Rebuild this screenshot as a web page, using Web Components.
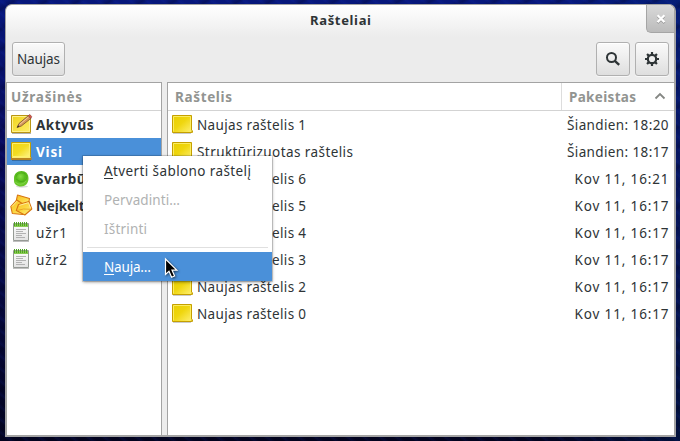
<!DOCTYPE html>
<html lang="lt">
<head>
<meta charset="utf-8">
<title>Rašteliai</title>
<style>
html,body{margin:0;height:100%;overflow:hidden}
body{font:13.500px "Noto Sans","Open Sans",sans-serif;color:#2e3436}
</style>
</head>
<body>
<notes-desktop></notes-desktop>
<script>
const define = (name, html, setup) => customElements.define(name, class extends HTMLElement {
  connectedCallback() {
    if (this.shadowRoot) return;
    this.attachShadow({mode: 'open'}).innerHTML = typeof html === 'function' ? html(this) : html;
    if (setup) setup(this);
  }
});

/* Label whose letter spacing is adjusted to give a fixed advance width. */
define('fit-text', '<style>:host{display:inline-block;white-space:nowrap;flex:none}span{display:inline-block;white-space:nowrap}</style><span><slot></slot></span>', el => {
  const w = +el.getAttribute('w'), s = el.shadowRoot.querySelector('span');
  const n = el.textContent.length;
  s.style.letterSpacing = (w - s.getBoundingClientRect().width) / (n - 1) + 'px';
  el.style.width = w + 'px';
});

const icons = {
  note: `<defs><linearGradient id="g" x2="1" y2="1"><stop stop-color="#e9ce00"/><stop offset=".45" stop-color="#efd60e"/><stop offset="1" stop-color="#fff176"/></linearGradient></defs>
    <path d="M2 19.500h18" stroke="#000" stroke-opacity=".2"/><path d="M1.500 1.500h19v14.500l1 1v1l-1.500.5h-18.500z" fill="url(#g)" stroke="#c5a000"/><path d="M2.500 17.500v-15h17v14" fill="none" stroke="#fbec62"/><path d="M19 18.500l3-2-.5 2.500z" fill="#c8a30a"/>`,
  pad: `<defs><linearGradient id="g" x2="1" y2="1"><stop stop-color="#f0d510"/><stop offset=".5" stop-color="#f3dc22"/><stop offset="1" stop-color="#fff58f"/></linearGradient></defs>
    <path d="M2 19.500h19" stroke="#000" stroke-opacity=".25"/><path d="M1.500 1.500h19v15h-19z" fill="url(#g)" stroke="#c5a000"/><path d="M2.500 15.500v-13h17v13z" fill="none" stroke="#fff06b"/><path d="M1 16h20.500v3h-20.500z" fill="#b98420"/><path d="M2 16.500h18.500" stroke="#fbea70"/>`,
  edit: `<defs><linearGradient id="g" x2="1" y2="1"><stop stop-color="#efd21a"/><stop offset="1" stop-color="#fff06a"/></linearGradient></defs>
    <path d="M2 19.500h19" stroke="#000" stroke-opacity=".3"/><path d="M1.500 1.500h19v17h-19z" fill="url(#g)" stroke="#b99513"/><path d="M2.500 17.500v-15h17v15z" fill="none" stroke="#fff28a"/>
    <path d="M7 13.500l2-4 9.500-8 2.500 2.800-9.700 7.700z" fill="#d7985b" stroke="#79502d" stroke-width=".8"/><path d="M9.500 10.500l9-7.500" stroke="#f2cda0"/><path d="M18.300 1.700l1.500-1.300 2.200 2.500-1.500 1.400z" fill="#d85650" stroke="#8e4740" stroke-width=".6"/><path d="M7 13.500l1.100-2.300 1.400 1.600z" fill="#3c3221"/>`,
  pin: `<defs><radialGradient id="g" cx=".45" cy=".35"><stop stop-color="#85dc45"/><stop offset=".65" stop-color="#54ba1b"/><stop offset="1" stop-color="#6ac62c"/></radialGradient></defs>
    <ellipse cx="12" cy="18.500" rx="6" ry="1.200" opacity=".15"/><path d="M4 10c0-4 3-7 7.500-7 4.500 0 7 3 7 7.500 0 5-3.500 8-7.500 8-4 0-7-2.500-7-5.500z" fill="url(#g)"/><path d="M6.500 8.500c0-4.500 10-5 10.500 0 0 6-8 6.500-10.500 2.500" fill="none" stroke="#419c13" stroke-opacity=".5"/><path d="M5.500 14c2.500 3.500 8 2.500 10.500-1" fill="none" stroke="#8add50" stroke-opacity=".7"/>`,
  stack: `<defs><linearGradient id="g" x2="1" y2="1"><stop stop-color="#f9bd20"/><stop offset=".5" stop-color="#fbd741"/><stop offset="1" stop-color="#fff389"/></linearGradient></defs>
    <g fill="url(#g)" stroke="#d87510" stroke-width="1.100" stroke-linejoin="round"><path d="M7.500 0l12 3.500-1.500 8-12.500-2.500z"/><path d="M.8 11.500l6-6.500 10 6.500-4 8-10.500-1z"/><path d="M8.500 9.500l10.500-3 2.800 7.500-7 6-8.500-4.500z"/></g><path d="M9.500 10.300l9-2.600 2 5.500M2 11.500l5-5.300" fill="none" stroke="#ffeb9b"/><path d="M7 15.500l6.500-1.500 7.500.3" fill="none" stroke="#e49b20" stroke-width=".8"/>`,
  book: `<defs><linearGradient id="g" x2="0" y2="1"><stop stop-color="#fff"/><stop offset="1" stop-color="#e2e2e2"/></linearGradient></defs>
    <path d="M3 19.500h16" stroke="#000" stroke-opacity=".25"/><path d="M3.500 1.500h15v17h-15z" fill="url(#g)" stroke="#969a95"/><path d="M4 2h14v3h-14z" fill="#8acb53"/><path d="M4.500 0v4M6.500 0v4M8.500 0v4M10.500 0v4M12.500 0v4M14.500 0v4M16.500 0v4" stroke="#4fa322"/><path d="M6 7.500h10M6 9.500h7M6 11.500h10M6 13.500h6M6 15.500h9" stroke="#aaa" stroke-width=".9"/>`
};
define('note-icon', el => `<style>:host{display:block;width:23px;height:21px;flex:none}svg{display:block;overflow:visible}</style><svg width="23" height="21" viewBox="0 0 23 21">${icons[el.getAttribute('name')]}</svg>`);

define('tool-button', `<style>
:host{display:flex;box-sizing:border-box;height:34px;align-items:center;justify-content:center;border:1px solid #b0b0b0;border-radius:3px;background:linear-gradient(#fafafa,#eee 45%,#dedede);box-shadow:inset 0 1px #fff,0 1px #f8f8f8;flex:none}
</style><slot></slot>`);

define('title-bar', `<style>
:host{display:grid;grid-template-columns:29px 1fr 28px;height:32px;background:linear-gradient(#fff,#ececec);font:bold 13px "Noto Sans",sans-serif;border-radius:6px 6px 0 0}
.t{grid-column:2;text-align:center;line-height:30px}
.x{box-sizing:border-box;height:28px;border:solid #a5a5a5;border-width:0 0 1px 1px;border-radius:0 5px 0 5px;background:linear-gradient(#d9d9d9,#bbb);display:grid;place-items:center}
</style><div class="t"><fit-text w="61">Rašteliai</fit-text></div><div class="x"><svg width="10" height="10" viewBox="0 0 10 10"><path d="M1.500 2l7 7M8.500 2l-7 7" stroke="#888" stroke-width="2.300"/><path d="M1.500 1.200l7 7M8.500 1.200l-7 7" stroke="#fff" stroke-width="2.300"/></svg></div>`);

define('tool-bar', `<style>
:host{display:flex;height:45px;box-sizing:border-box;padding:5px 5px 0 6px;gap:5px;background:#ececec}
.naujas{width:53px}.sq{width:34px}.gap{flex:1}svg{display:block}
</style><tool-button class="naujas"><fit-text w="43">Naujas</fit-text></tool-button><span class="gap"></span>
<tool-button class="sq"><svg width="16" height="16" viewBox="0 0 16 16"><circle cx="6.500" cy="6.500" r="4.500" fill="none" stroke="#2e3436" stroke-width="2"/><path d="M9.800 9.800l4.400 4" stroke="#2e3436" stroke-width="2.400"/></svg></tool-button>
<tool-button class="sq"><svg width="16" height="16" viewBox="0 0 16 16"><circle cx="8" cy="8" r="4.200" fill="none" stroke="#2e3436" stroke-width="2.200"/><path d="M8 1v2.500M8 12.500v2.500M1 8h2.500M12.500 8h2.500M3.050 3.050l1.800 1.800M11.150 11.150l1.800 1.800M3.050 12.950l1.800-1.800M11.150 4.850l1.800-1.800" stroke="#2e3436" stroke-width="2.200"/></svg></tool-button>`);

define('column-header', `<style>:host{display:flex;box-sizing:border-box;height:28px;border-bottom:1px solid #d3d3d3;color:#929491;font:bold 13.500px "Noto Sans",sans-serif;align-items:stretch;line-height:28px}</style><slot></slot>`);

define('list-row', el => `<style>
:host{display:flex;height:27px;align-items:center;line-height:27px;padding:0 5.500px 0 3px}
:host([bold]){font:bold 13.500px/27px "Noto Sans",sans-serif}
:host([selected]){background:#4a90d9;color:#fff}
note-icon{margin-right:3px}.end{margin-left:auto;display:flex}
::slotted(fit-text){margin-top:2px}
</style><note-icon name="${el.getAttribute('icon')}"></note-icon><slot></slot><span class="end"><slot name="end"></slot></span>`);

define('notebook-list', () => `<style>
:host{display:block;width:154px;background:#fff;border:solid #a3a3a3;border-width:1px 1px 0 0;overflow:hidden}
column-header fit-text{margin-left:4px}
</style><column-header><fit-text w="71">Užrašinės</fit-text></column-header>
<list-row bold icon="edit"><fit-text w="57.500">Aktyvūs</fit-text></list-row>
<list-row bold selected icon="pad"><fit-text w="26">Visi</fit-text></list-row>
<list-row bold icon="pin"><fit-text w="57">Svarbūs</fit-text></list-row>
<list-row bold icon="stack"><fit-text w="52.500">Neįkelti</fit-text></list-row>
<list-row icon="book"><fit-text w="31">užr1</fit-text></list-row>
<list-row icon="book"><fit-text w="31">užr2</fit-text></list-row>`);

const notes = [['Naujas raštelis 1',109,'Šiandien: 18:20'],['Struktūrizuotas raštelis',156,'Šiandien: 18:17'],['Naujas raštelis 6',109,'Kov 11, 16:21'],
  ...[5,4,3,2,0].map(n => ['Naujas raštelis ' + n,109,'Kov 11, 16:17'])];
define('note-list', () => `<style>
:host{display:block;background:#fff;border:solid #a3a3a3;border-width:1px 0 0 1px}
.a{flex:1;padding-left:7px}.b{width:105px;padding-left:7px;display:flex;border-left:1px solid #ddd}
svg{margin:8px 0 0 18px}
</style><column-header><div class="a"><fit-text w="57">Raštelis</fit-text></div><div class="b"><fit-text w="67">Pakeistas</fit-text><svg width="12" height="10" viewBox="0 0 12 10"><path d="M1.500 7.500l4.500-4.500 4.500 4.500" fill="none" stroke="#858784" stroke-width="1.800"/></svg></div></column-header>
${notes.map(([t,w,d]) => `<list-row icon="note"><fit-text w="${w}">${t}</fit-text><fit-text slot="end" w="${d[0]==='K'?94:101.5}">${d}</fit-text></list-row>`).join('')}`);

define('menu-item', `<style>:host{display:flex;height:29px;align-items:center;line-height:29px;padding-left:21px}
:host([disabled]){color:#b0b2b2}:host([active]){background:#4a90d9;color:#fff}::slotted(fit-text){margin-top:2px}</style><slot></slot>`);

define('context-menu', `<style>
:host{display:block;width:189px;box-sizing:border-box;background:#fff;box-shadow:0 0 0 1px rgba(0,0,0,.12),0 1px 3px rgba(0,0,0,.45)}
hr{border:0;height:1px;background:#e0e0e0;margin:4px}u{text-underline-offset:2px;text-decoration-thickness:1px}
</style><menu-item><fit-text w="147"><u>A</u>tverti šablono raštelį</fit-text></menu-item>
<menu-item disabled><fit-text w="76">Pervadinti…</fit-text></menu-item>
<menu-item disabled><fit-text w="43">Ištrinti</fit-text></menu-item><hr>
<menu-item active><fit-text w="47"><u>N</u>auja…</fit-text></menu-item>`);

define('notes-desktop', `<style>
:host{display:block;position:relative;box-sizing:border-box;width:680px;height:441px;padding:4px 4px 4px 5px;
 background:repeating-linear-gradient(38deg,transparent 0 5px,rgba(30,60,220,.1) 7px,transparent 10px),repeating-linear-gradient(-32deg,transparent 0 9px,rgba(0,0,20,.25) 12px,transparent 17px),linear-gradient(90deg,transparent 80%,rgba(0,40,110,.35)),linear-gradient(#07187c,#070b5c 30%,#05073f 65%,#02031e)}
.win{display:flex;flex-direction:column;box-sizing:border-box;height:433px;border:1px solid #a3a3a3;border-width:1px 2px 2px 1px;border-radius:7px 7px 0 0;background:#ececec;overflow:hidden}
.panes{display:grid;grid-template-columns:155px 1fr;gap:5px;flex:1;border-left:1px solid #a3a3a3}
context-menu{position:absolute;left:83px;top:156px}
.cursor{position:absolute;left:163px;top:257px;filter:drop-shadow(1px 1px 1px #0008)}
</style><div class="win"><title-bar></title-bar><tool-bar></tool-bar><div class="panes"><notebook-list></notebook-list><note-list></note-list></div></div>
<context-menu></context-menu>
<svg class="cursor" width="16" height="24" viewBox="0 0 16 24"><path d="M2.500 2v15.500l3.500-3.200 2.600 6 3-1.300-2.600-5.900h4.800z" fill="#000" stroke="#fff" stroke-width="1.200"/></svg>`);
</script>
</body>
</html>
